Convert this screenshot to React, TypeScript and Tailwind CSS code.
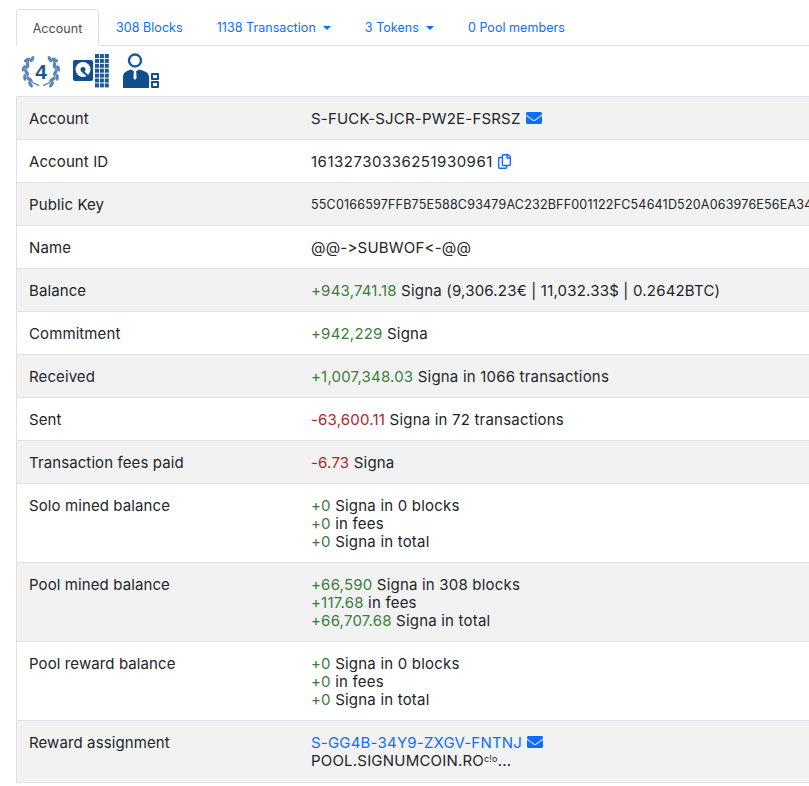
import React from "react";
import { FaEnvelope, FaRegCopy } from "react-icons/fa";

const G = ({ children }: { children: React.ReactNode }) => <span className="text-[#3b7d3b]">{children}</span>;
const R = ({ children }: { children: React.ReactNode }) => <span className="text-[#a52a2a]">{children}</span>;
const Env = () => <FaEnvelope className="inline-block text-[#0d6efd] text-[16px] ml-[5px] align-[-2px]" />;

const Caret = () => (
  <span className="inline-block ml-[7px] align-[2px] w-0 h-0 border-x-[4px] border-x-transparent border-t-[4px] border-t-[#0d6efd]" />
);

function Row({ label, odd, children }: { label: string; odd?: boolean; children: React.ReactNode }) {
  return (
    <div className={`flex border-b border-[#dee2e6] ${odd ? "bg-[#f2f2f2]" : "bg-white"}`}>
      <div className="w-[282px] shrink-0 pl-[12px] pt-[13px] pb-[11px] tracking-[0.1px]">{label}</div>
      <div className="pl-[12px] pt-[13px] pb-[11px] whitespace-nowrap tracking-[0.2px]">{children}</div>
    </div>
  );
}

function Laurel() {
  const leaves: React.ReactNode[] = [];
  for (let i = 0; i < 8; i++) {
    const t = 128 + i * 15;
    const rad = (t * Math.PI) / 180;
    const rr = i % 2 ? 17.5 : 14.5;
    const x = 19 + rr * Math.cos(rad);
    const y = 15.5 - rr * Math.sin(rad);
    const rot = 90 - t + (i % 2 ? 22 : -22);
    leaves.push(<ellipse key={i} cx={x} cy={y} rx="3.4" ry="1.7" transform={`rotate(${rot} ${x} ${y})`} />);
  }
  return (
    <svg width="38" height="33" viewBox="0 0 38 33" fill="#5a86b8">
      {[0, 1].map((side) => (
        <g key={side} transform={side ? "translate(38,0) scale(-1,1)" : undefined}>
          {leaves}
          <path d="M8 4 C1 12 3 26 17 30.5" stroke="#5a86b8" strokeWidth="1.4" fill="none" />
        </g>
      ))}
      <text x="19" y="23.5" textAnchor="middle" fontFamily="Liberation Sans, sans-serif" fontWeight="700" fontSize="21" fill="#1a5594">4</text>
    </svg>
  );
}

function Disk() {
  const cells = [];
  for (let r = 0; r < 7; r++) for (let c = 0; c < 3; c++) cells.push(<rect key={`${r}-${c}`} x={22 + c * 4.9} y={0 + r * 4.9} width="4" height="4" fill="#1a5a9a" />);
  return (
    <svg width="36" height="34" viewBox="0 0 36 34">
      <rect x="0" y="6" width="20" height="21" rx="2" fill="#0f4f8f" />
      <circle cx="10" cy="15.5" r="7.5" fill="#ffffff" />
      <circle cx="10" cy="15.5" r="2.5" fill="#0f4f8f" />
      <path d="M9 17 L15 22" stroke="#0f4f8f" strokeWidth="2" />
      {cells}
    </svg>
  );
}

function Person() {
  return (
    <svg width="36" height="36" viewBox="0 0 36 36" fill="#0f4f8f">
      <circle cx="12" cy="7.5" r="6" fill="none" stroke="#1a5a9a" strokeWidth="2.4" />
      <path d="M0 35 V24 C0 19 4 18 8 16.5 L12 19 L16 16.5 C21 18 26 19 26 24 V35 Z" />
      <path d="M11 17 h2 l.6 8 l-1.6 2 l-1.6 -2 z" fill="#ffffff" />
      <rect x="28" y="20" width="8" height="7" rx="1" />
      <rect x="30" y="22" width="4" height="3" fill="#ffffff" />
      <rect x="28" y="28" width="8" height="7" rx="1" />
      <rect x="30" y="30" width="4" height="3" fill="#ffffff" />
    </svg>
  );
}

export default function App() {
  return (
    <div className="w-[809px] h-[786px] overflow-hidden bg-white text-[#212529] text-[15px] leading-[18px] font-['Inter','Liberation_Sans',sans-serif] [font-feature-settings:'calt'_0] pl-[16px] pt-[9px]">
      <div className="w-[900px] flex h-[37px] border-b border-[#dee2e6] text-[12.5px] text-[#0d6efd] leading-[16px] tracking-[0.05px]">
        <div className="h-[37px] w-[83px] pt-[2px] flex items-center justify-center bg-white border border-[#dee2e6] border-b-white rounded-t-[4px] text-[#495057]">Account</div>
        <div className="flex items-center pt-[2px] pl-[17px]">308 Blocks</div>
        <div className="flex items-center pt-[2px] pl-[34px]">1138 Transaction<Caret /></div>
        <div className="flex items-center pt-[2px] pl-[34px]">3 Tokens<Caret /></div>
        <div className="flex items-center pt-[2px] pl-[34px]">0 Pool members</div>
      </div>
      <div className="flex items-center h-[50px] pl-[6px]">
        <Laurel />
        <div className="ml-[13px] flex"><Disk /></div>
        <div className="ml-[14px] flex"><Person /></div>
      </div>
      <div className="w-[900px] border-t border-l border-[#dee2e6]">
        <Row label="Account" odd>S-FUCK-SJCR-PW2E-FSRSZ<Env /></Row>
        <Row label="Account ID"><span className="tracking-[0.5px]">16132730336251930961</span><FaRegCopy className="inline-block text-[#0d6efd] text-[15px] ml-[4px] align-[-2px]" /></Row>
        <Row label="Public Key" odd><div className="text-[12.5px] tracking-[0.2px]">55C0166597FFB75E588C93479AC232BFF001122FC54641D520A063976E56EA34</div></Row>
        <Row label="Name">@@-&gt;SUBWOF&lt;-@@</Row>
        <Row label="Balance" odd><G>+943,741.18</G> Signa (9,306.23€ | 11,032.33$ | 0.2642BTC)</Row>
        <Row label="Commitment"><G>+942,229</G> Signa</Row>
        <Row label="Received" odd><G>+1,007,348.03</G> Signa in 1066 transactions</Row>
        <Row label="Sent"><R>-63,600.11</R> Signa in 72 transactions</Row>
        <Row label="Transaction fees paid" odd><R>-6.73</R> Signa</Row>
        <Row label="Solo mined balance">
          <div><G>+0</G> Signa in 0 blocks</div>
          <div><G>+0</G> in fees</div>
          <div><G>+0</G> Signa in total</div>
        </Row>
        <Row label="Pool mined balance" odd>
          <div><G>+66,590</G> Signa in 308 blocks</div>
          <div><G>+117.68</G> in fees</div>
          <div><G>+66,707.68</G> Signa in total</div>
        </Row>
        <Row label="Pool reward balance">
          <div><G>+0</G> Signa in 0 blocks</div>
          <div><G>+0</G> in fees</div>
          <div><G>+0</G> Signa in total</div>
        </Row>
        <Row label="Reward assignment" odd>
          <div className="h-[18px]"><span className="text-[#0d6efd]">S-GG4B-34Y9-ZXGV-FNTNJ</span><Env /></div>
          <div className="h-[19px]">POOL.SIGNUMCOIN.RO<span className="text-[9px] leading-[0] align-[4px]">c!o</span>...</div>
        </Row>
      </div>
    </div>
  );
}
